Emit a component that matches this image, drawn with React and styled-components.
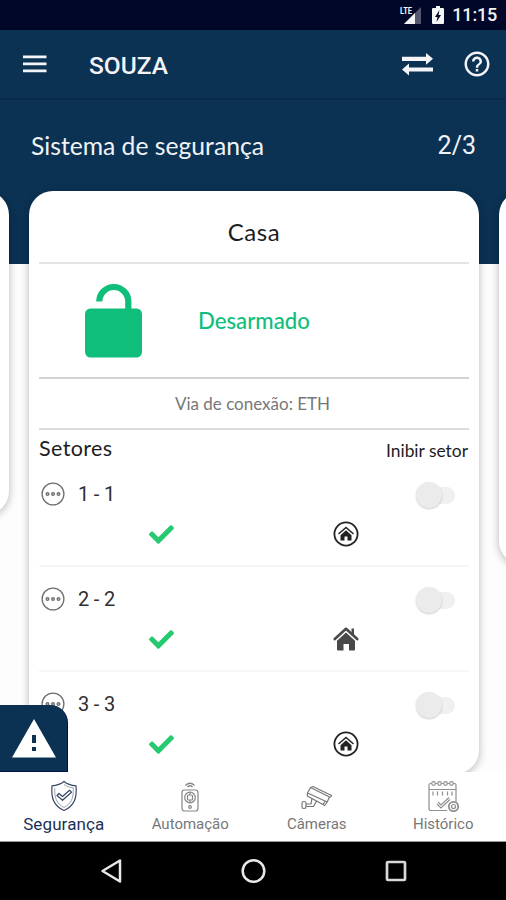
import styled, { createGlobalStyle, css } from 'styled-components'
import { MdHelpOutline } from 'react-icons/md'
import { FaCheck } from 'react-icons/fa'

const colors = {
  primary: '#0b3253',
  statusBar: '#010729',
  green: '#10be7b',
  check: '#25c96f',
  text: '#1d1d1f',
  muted: '#777777',
}

const GlobalStyle = createGlobalStyle`
  * {
    box-sizing: border-box;
  }
  body {
    margin: 0;
    background: #ffffff;
    font-family: Lato, 'Open Sans', sans-serif;
  }
  svg {
    display: block;
    flex-shrink: 0;
  }
`

const Screen = styled.div`
  display: flex;
  flex-direction: column;
  width: 506px;
  height: 900px;
  overflow: hidden;
`

const StatusBar = styled.div`
  display: flex;
  align-items: center;
  justify-content: flex-end;
  height: 30px;
  padding-right: 9px;
  background-color: ${colors.statusBar};
  color: #f2f2f2;
`

const StatusIcons = styled.div`
  display: flex;
  gap: 9px;
`

const Clock = styled.span`
  margin-left: 8px;
  font: 500 18px/32px Roboto, sans-serif;
  letter-spacing: -0.2px;
`

const AppBar = styled.header`
  display: flex;
  align-items: center;
  height: 70px;
  padding: 0 14px 0 23px;
  background-color: ${colors.primary};
  border-bottom: 2px solid #082b4c;
  color: #f4f4f8;
`

const AppTitle = styled.h1`
  flex: 1;
  margin: 3px 0 0 42px;
  font: 500 24.5px/30px Roboto, sans-serif;
`

const HelpIcon = styled(MdHelpOutline)`
  width: 30px;
  height: 30px;
  margin-left: 29px;
`

const Content = styled.main`
  position: relative;
  display: flex;
  flex-direction: column;
  height: 672px;
  overflow: hidden;
  background: linear-gradient(${colors.primary} 164px, #fdfdfd 164px);
`

const SectionHeader = styled.div`
  display: flex;
  flex-shrink: 0;
  align-items: center;
  justify-content: space-between;
  height: 91px;
  padding: 0 30px 1px 31px;
  color: #f0f2f5;
  font-size: 24.7px;
`

const Counter = styled.span`
  padding-top: 2px;
  font: 400 25px/30px Roboto, sans-serif;
`

const Carousel = styled.div`
  display: flex;
  align-items: flex-start;
  justify-content: center;
  gap: 20px;
  padding-left: 2px;
`

const Card = styled.section`
  flex-shrink: 0;
  width: 450px;
  height: ${({ $height }) => $height}px;
  padding: 0 10px;
  background-color: #ffffff;
  border-radius: 24px;
  box-shadow: 0 2px 8px rgba(0, 0, 0, 0.28);
`

const CardTitle = styled.h2`
  margin: 0;
  padding-top: 1px;
  height: 73px;
  border-bottom: 2px solid #e4e4e4;
  color: ${colors.text};
  font-size: 24px;
  font-weight: 400;
  line-height: 80px;
  letter-spacing: 0.6px;
  text-align: center;
`

const ArmState = styled.div`
  display: flex;
  align-items: center;
  height: 115px;
  padding-left: 46px;
  border-bottom: 2px solid #d2d2d2;
`

const StateLabel = styled.span`
  margin-left: 55px;
  color: ${colors.green};
  font-size: 22.2px;
  font-weight: 500;
`

const Connection = styled.div`
  height: 51px;
  padding-right: 3px;
  border-bottom: 2px solid #dcdcdc;
  color: ${colors.muted};
  font-size: 17px;
  line-height: 50px;
  text-align: center;
`

const SectorsHeader = styled.div`
  display: flex;
  justify-content: space-between;
  height: 32px;
  padding-right: 1px;
  color: ${colors.text};
`

const SectorsTitle = styled.span`
  font-size: 21.5px;
  line-height: 37px;
  letter-spacing: 0.4px;
`

const InhibitTitle = styled.span`
  font-size: 17.4px;
  line-height: 42px;
`

const SectorRow = styled.div`
  height: 105px;
  border-bottom: 2px solid #f6f6f6;
`

const SectorTop = styled.div`
  display: flex;
  align-items: center;
  height: 59px;
  padding: 4px 14px 0 2px;
`

const SectorName = styled.span`
  flex: 1;
  margin-left: 13px;
  color: #303030;
  font: 400 20px/26px Roboto, sans-serif;
  letter-spacing: -0.2px;
`

const SectorBottom = styled.div`
  display: grid;
  grid-template-columns: 245px 123px;
  align-items: center;
  justify-items: center;
  height: 26px;
`

const Switch = styled.div`
  display: flex;
  align-items: center;
  width: 39px;
  height: 26px;
  margin-top: 3px;
  &::before {
    content: '';
    width: 26px;
    height: 26px;
    border-radius: 50%;
    background-color: #ebebeb;
    box-shadow: 0 1px 2px rgba(0, 0, 0, 0.2);
    z-index: 1;
  }
  &::after {
    content: '';
    width: 21px;
    height: 17px;
    margin-left: -8px;
    border-radius: 0 9px 9px 0;
    background-color: #f0f0f0;
  }
`

const CheckIcon = styled(FaCheck)`
  width: 25px;
  height: 25px;
  color: ${colors.check};
`

const AlertBadge = styled.div`
  position: absolute;
  left: 0;
  bottom: 0;
  display: flex;
  align-items: center;
  justify-content: center;
  width: 68px;
  height: 67px;
  background-color: ${colors.primary};
  border-radius: 0 18px 0 0;
  border-right: 1px solid #04104a;
  border-bottom: 1px solid #04104a;
`

const TabBar = styled.nav`
  display: grid;
  grid-template-columns: repeat(4, 1fr);
  height: 70px;
  background-color: #ffffff;
  border-bottom: 1px solid #999999;
`

const Tab = styled.div`
  display: flex;
  flex-direction: column;
  align-items: center;
  padding: 8px 0 0 1px;
  color: ${colors.muted};
  font: 400 15px/20px Roboto, sans-serif;
  ${({ $active }) =>
    $active &&
    css`
      color: #1c3157;
      font-size: 17px;
      letter-spacing: 0.1px;
    `}
`

const TabLabel = styled.span`
  margin-top: 2px;
`

const SystemNav = styled.div`
  display: flex;
  align-items: center;
  justify-content: space-between;
  height: 58px;
  padding: 0 98px;
  background-color: #000000;
`

const SignalIcon = () => (
  <svg width="23" height="20" viewBox="0 0 23 20">
    <path d="M21 2v17H4z" fill="#55566f" />
    <path d="M15 8v11H4z" fill="#f5f5f5" />
    <text x="0" y="9" fill="#f5f5f5" fontFamily="Roboto" fontSize="9.500" fontWeight="700" textLength="12" lengthAdjust="spacingAndGlyphs">LTE</text>
  </svg>
)

const BatteryIcon = () => (
  <svg width="12" height="20" viewBox="0 0 12 20">
    <path d="M4 1h4v2h3q1 0 1 1v14q0 1-1 1H1q-1 0-1-1V4q0-1 1-1h3z" fill="#f5f5f5" />
    <path d="M7.500 5 3 12h2.500L4.500 17 9 10H6.500z" fill="#010729" />
  </svg>
)

const MenuIcon = () => (
  <svg width="24" height="20" viewBox="0 0 24 20" fill="currentColor">
    <path d="M0 1.500h23.500v2.800H0zM0 8.500h23.500v2.800H0zM0 15.500h23.500v2.800H0z" />
  </svg>
)

const SwapIcon = () => (
  <svg width="32" height="24" viewBox="0 0 32 24" fill="currentColor">
    <path d="M1 4.800h24V1L32 6.800l-7 6V9H1zM32 15.500H8V11.500L1 17.500l7 6V19.500H32z" />
  </svg>
)

const UnlockIcon = () => (
  <svg width="58" height="75" viewBox="0 0 58 75">
    <path d="M14.300 18.500a14.500 14.500 0 0 1 29 0V28" fill="none" stroke={colors.green} strokeWidth="6.200" />
    <rect x="0" y="25.500" width="57" height="49" rx="5.500" fill={colors.green} />
  </svg>
)

const DotsIcon = () => (
  <svg width="24" height="24" viewBox="0 0 24 24" fill="none" stroke="#6f6f6f">
    <circle cx="12" cy="12" r="10.900" strokeWidth="1.300" />
    <circle cx="6.500" cy="12" r="1.300" strokeWidth="1.400" />
    <circle cx="12" cy="12" r="1.300" strokeWidth="1.400" />
    <circle cx="17.500" cy="12" r="1.300" strokeWidth="1.400" />
  </svg>
)

const CircledHouseIcon = () => (
  <svg width="26" height="26" viewBox="0 0 26 26">
    <circle cx="13" cy="13" r="11.600" fill="none" stroke="#222" strokeWidth="1.800" />
    <path d="M5.500 13 13 6.500l7.500 6.500" fill="none" stroke="#222" strokeWidth="1.500" />
    <path d="M13 9.300l5.500 4.900v5.300h-4v-4h-3v4h-4v-5.300z" fill="#222" />
  </svg>
)

const HouseIcon = () => (
  <svg width="26" height="26" viewBox="0 0 26 26" fill="#484848">
    <path d="M1.800 13 13 2.800 24.200 13" fill="none" stroke="#484848" strokeWidth="2.600" strokeLinecap="round" strokeLinejoin="round" />
    <path d="M18.500 2.500H21v7l-2.500-2.500z" />
    <path d="M13 6.500l9 8.200v8.800q0 1-1 1h-5V18h-5.500v6.500H5q-1 0-1-1v-8.800z" />
  </svg>
)

const WarningIcon = () => (
  <svg width="44" height="39" viewBox="0 0 44 39">
    <path d="M22 0 44 38.500H0z" fill="#ffffff" />
    <path d="M20 16h4v8h-4zM20 28h4v4h-4z" fill={colors.primary} />
  </svg>
)

const ShieldIcon = () => (
  <svg width="28" height="32" viewBox="0 0 28 32" fill="none" stroke="#344563" strokeWidth="1.200" strokeLinejoin="round">
    <path d="M14 1.500c3.500 3 7.500 4 12 4.300C27 17 25 25.500 14 30.500 3 25.500 1 17 2 5.800 6.500 5.500 10.500 4.500 14 1.500z" />
    <path d="M14 4.500c3 2 6 3 9.300 3.400C23.500 17 22 23.500 14 27.500 6 23.500 4.500 17 4.700 7.900" strokeWidth=".5" />
    <path d="M7 15.500l2-2 3.500 3 7-6.300 2 2-9 8.100z" />
  </svg>
)

const RemoteIcon = () => (
  <svg width="28" height="32" viewBox="0 0 28 32" fill="none" stroke="#858585" strokeWidth="1.200">
    <path d="M9.500 5.500q4.500-4.500 9 0M11.500 7q2.500-2.500 5 0" />
    <rect x="6" y="10" width="16" height="21" rx="2.500" />
    <circle cx="14" cy="17.500" r="5.300" />
    <rect x="11.500" y="15" width="5" height="5" rx="1" />
    <path d="M14 12.500v2.500M14 20v2.500" />
    <circle cx="14" cy="27" r="1.300" />
  </svg>
)

const CameraIcon = () => (
  <svg width="32" height="32" viewBox="0 0 32 32" fill="none" stroke="#777" strokeWidth="1.200" strokeLinejoin="round">
    <path d="M9.500 7.500 28.500 17l-2.300 5L6.500 13z" />
    <path d="M9.500 7.500 12 6.500l18.500 9-1 2M6.500 13l-.2 3L22 24.500l2.300-3.500M26.200 22l-2.700 3.500-1.500-1" />
    <path d="M11 18.500l-1 5.500H5M15.500 21l-3 5.500H5" />
    <rect x="1" y="21.500" width="4" height="7" rx="1.700" />
  </svg>
)

const CalendarIcon = () => (
  <svg width="32" height="32" viewBox="0 0 32 32" fill="none" stroke="#909090" strokeWidth="1.200">
    <path d="M20 30.500H4q-2 0-2-2V5q0-1.500 1.500-1.500h24Q29 3.500 29 5v17M2 9.500h27" />
    <path d="M6 11.500v4M10.500 11.500v4M15.500 11.500v4M20.500 11.500v4M25 11.500v4" />
    <path d="M11 22l3 3 8-7.500M10 24l4 4 9-8.500" />
    <g fill="#fff">
      <circle cx="6.500" cy="3.500" r="1.800" />
      <circle cx="12.500" cy="3.500" r="1.800" />
      <circle cx="18.500" cy="3.500" r="1.800" />
      <circle cx="24.500" cy="3.500" r="1.800" />
      <circle cx="26.500" cy="26.500" r="4.700" strokeWidth="1.800" />
      <circle cx="26.500" cy="26.500" r="2" />
    </g>
  </svg>
)

const sectors = [
  { name: '1 - 1', circled: true },
  { name: '2 - 2', circled: false },
  { name: '3 - 3', circled: true },
]

const tabs = [
  { label: 'Segurança', Icon: ShieldIcon, active: true },
  { label: 'Automação', Icon: RemoteIcon },
  { label: 'Câmeras', Icon: CameraIcon },
  { label: 'Histórico', Icon: CalendarIcon },
]

const Sector = ({ name, circled }) => (
  <SectorRow>
    <SectorTop>
      <DotsIcon />
      <SectorName>{name}</SectorName>
      <Switch />
    </SectorTop>
    <SectorBottom>
      <CheckIcon />
      {circled ? <CircledHouseIcon /> : <HouseIcon />}
    </SectorBottom>
  </SectorRow>
)

const App = () => {
  return (
    <Screen>
      <GlobalStyle />
      <StatusBar>
        <StatusIcons>
          <SignalIcon />
          <BatteryIcon />
        </StatusIcons>
        <Clock>11:15</Clock>
      </StatusBar>
      <AppBar>
        <MenuIcon />
        <AppTitle>SOUZA</AppTitle>
        <SwapIcon />
        <HelpIcon />
      </AppBar>
      <Content>
        <SectionHeader>
          <span>Sistema de segurança</span>
          <Counter>2/3</Counter>
        </SectionHeader>
        <Carousel>
          <Card $height={324} />
          <Card $height={583}>
            <CardTitle>Casa</CardTitle>
            <ArmState>
              <UnlockIcon />
              <StateLabel>Desarmado</StateLabel>
            </ArmState>
            <Connection>Via de conexão: ETH</Connection>
            <SectorsHeader>
              <SectorsTitle>Setores</SectorsTitle>
              <InhibitTitle>Inibir setor</InhibitTitle>
            </SectorsHeader>
            {sectors.map((sector) => (
              <Sector key={sector.name} {...sector} />
            ))}
          </Card>
          <Card $height={374} />
        </Carousel>
        <AlertBadge>
          <WarningIcon />
        </AlertBadge>
      </Content>
      <TabBar>
        {tabs.map(({ label, Icon, active }) => (
          <Tab key={label} $active={active}>
            <Icon />
            <TabLabel>{label}</TabLabel>
          </Tab>
        ))}
      </TabBar>
      <SystemNav>
        <svg width="26" height="28" viewBox="0 0 26 28" fill="none" stroke="#e8e8e8" strokeWidth="2.500">
          <path d="M22 3.500v21L4.500 14z" strokeLinejoin="round" />
        </svg>
        <svg width="28" height="28" viewBox="0 0 28 28" fill="none" stroke="#e8e8e8" strokeWidth="2.500">
          <circle cx="13.500" cy="14" r="10.800" />
        </svg>
        <svg width="24" height="24" viewBox="0 0 24 24" fill="none" stroke="#d8d8d8" strokeWidth="2.700">
          <rect x="3" y="3" width="18" height="18" rx="1" />
        </svg>
      </SystemNav>
    </Screen>
  )
}

export default App
